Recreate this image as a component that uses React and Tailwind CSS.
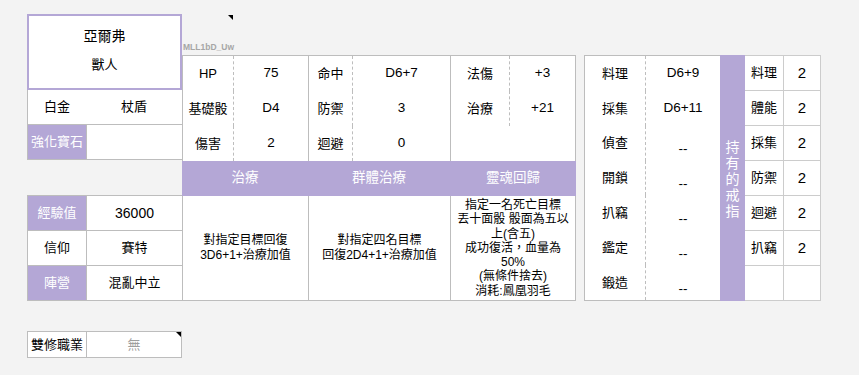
import React from "react";

const statCols = [
  { w: "w-[126px]", lw: "w-[50px]", rows: [["HP", "75"], ["基礎骰", "D4"], ["傷害", "2"]] },
  { w: "w-[142px]", lw: "w-[43px]", rows: [["命中", "D6+7"], ["防禦", "3"], ["迴避", "0"]] },
  { w: "w-[126px] border-r", lw: "w-[58px]", rows: [["法傷", "+3"], ["治療", "+21"], null] },
];

const skills = [
  { w: "w-[126px]", title: "治療", lines: ["對指定目標回復", "3D6+1+治療加值"], lead: "leading-[15px]" },
  { w: "w-[142px]", title: "群體治療", lines: ["對指定四名目標", "回復2D4+1+治療加值"], lead: "leading-[15px]" },
  {
    w: "w-[126px] border-r",
    title: "靈魂回歸",
    lines: ["指定一名死亡目標", "丟十面骰 骰面為五以", "上(含五)", "成功復活，血量為", "50%", "(無條件捨去)", "消耗:鳳凰羽毛"],
    lead: "leading-[14.3px]",
  },
];

const crafts = [
  ["料理", "D6+9"],
  ["採集", "D6+11"],
  ["偵查", "--"],
  ["開鎖", "--"],
  ["扒竊", "--"],
  ["鑑定", "--"],
  ["鍛造", "--"],
];

const rings = [
  ["料理", "2"],
  ["體能", "2"],
  ["採集", "2"],
  ["防禦", "2"],
  ["迴避", "2"],
  ["扒竊", "2"],
  ["", ""],
];

function Corner() {
  return <div className="absolute right-0 top-0 w-0 h-0 border-l-[5px] border-l-transparent border-t-[5px] border-t-black" />;
}

export default function App() {
  return (
    <div className="w-[859px] h-[375px] overflow-hidden bg-[#f3f3f3] pl-[27px] pt-[14px] flex text-black text-[13px] font-['Liberation_Sans','Noto_Sans_CJK_TC',sans-serif]">
      {/* left column */}
      <div className="w-[155px] flex flex-col">
        <div className="h-[76px] border-2 border-[#b4a7d6] bg-white flex flex-col items-center pt-[11px]">
          <div className="text-[14px] leading-[18px]">亞爾弗</div>
          <div className="mt-[11px] leading-[18px]">獸人</div>
        </div>
        <div className="h-[35px] flex bg-white border-l border-b border-[#bdbdbd]">
          <div className="w-[58px] flex items-center justify-center">白金</div>
          <div className="flex-1 flex items-center justify-center">杖盾</div>
        </div>
        <div className="h-[35px] flex bg-white border-l border-b border-[#bdbdbd]">
          <div className="w-[58px] flex items-center justify-center bg-[#b4a7d6] text-white">強化寶石</div>
          <div className="flex-1 border-l border-[#bdbdbd]" />
        </div>
        <div className="h-[35px]" />
        <div className="flex flex-col border-l border-t border-[#bdbdbd]">
          {[
            ["經驗值", "36000", true],
            ["信仰", "賽特", false],
            ["陣營", "混亂中立", true],
          ].map(([k, v, p]) => (
            <div key={k} className="h-[35px] flex bg-white border-b border-[#bdbdbd]">
              <div className={`w-[58px] flex items-center justify-center ${p ? "bg-[#b4a7d6] text-white" : ""}`}>{k}</div>
              <div className={`flex-1 flex items-center justify-center border-l border-[#bdbdbd] ${v === "36000" ? "text-[14px]" : ""}`}>{v}</div>
            </div>
          ))}
        </div>
        <div className="h-[30px]" />
        <div className="h-[27px] flex bg-white border border-[#bdbdbd]">
          <div className="w-[58px] flex items-center justify-center whitespace-nowrap">雙修職業</div>
          <div className="relative flex-1 flex items-center justify-center border-l border-[#bdbdbd] text-[#9e9e9e]">
            無
            <Corner />
          </div>
        </div>
      </div>

      {/* middle column */}
      <div className="w-[394px] flex flex-col">
        <div className="relative h-[41px] flex items-end pb-[3px] pl-[1px]">
          <span className="text-[8.5px] leading-[10px] font-bold text-[#a6a6a6]">MLL1bD_Uw</span>
          <div className="absolute left-[46px] top-[1px] w-0 h-0 border-l-[5px] border-l-transparent border-t-[5px] border-t-black" />
        </div>
        <div className="flex border-t border-[#bdbdbd] bg-white">
          {statCols.map((c, i) => (
            <div key={i} className={`${c.w} border-l border-[#bdbdbd] flex flex-col`}>
              {c.rows.map((r, j) => (
                <div key={j} className="h-[35px] flex">
                  <div className={`${c.lw} flex items-center justify-center`}>{r ? r[0] : ""}</div>
                  <div className={`flex-1 flex items-center justify-center text-[13.5px] ${r ? "border-l border-dashed border-[#bdbdbd]" : ""}`}>
                    {r ? r[1] : ""}
                  </div>
                </div>
              ))}
            </div>
          ))}
        </div>
        <div className="h-[35px] flex bg-[#b4a7d6] text-white text-[13.5px]">
          {skills.map((s) => (
            <div key={s.title} className={`${s.w.replace(" border-r", "")} flex items-center justify-center`}>
              {s.title}
            </div>
          ))}
        </div>
        <div className="h-[105px] flex bg-white border-b border-[#bdbdbd] text-[12px]">
          {skills.map((s) => (
            <div key={s.title} className={`${s.w} border-l border-[#bdbdbd] flex flex-col items-center justify-center ${s.lead}`}>
              {s.lines.map((l) => (
                <div key={l} className="whitespace-nowrap">
                  {l}
                </div>
              ))}
            </div>
          ))}
        </div>
      </div>

      {/* right column */}
      <div className="ml-[8px] mt-[41px] flex h-[246px]">
        <div className="w-[136px] flex flex-col bg-white border-l border-t border-b border-[#bdbdbd]">
          {crafts.map(([k, v]) => (
            <div key={k} className="h-[35px] flex">
              <div className="w-[60px] flex items-center justify-center">{k}</div>
              <div
                className={`flex-1 flex justify-center border-l border-dashed border-[#bdbdbd] text-[13.5px] ${
                  v === "--" ? "items-end pb-[1px]" : "items-center"
                }`}
              >
                {v}
              </div>
            </div>
          ))}
        </div>
        <div className="w-[25px] bg-[#b4a7d6] text-white flex flex-col items-center justify-center text-[14px] leading-[16px] pt-[2px]">
          {"持有的戒指".split("").map((c) => (
            <span key={c}>{c}</span>
          ))}
        </div>
        <div className="w-[76px] flex flex-col bg-white border-t border-[#cccccc]">
          {rings.map(([k, v], i) => (
            <div key={i} className="h-[35px] flex border-b border-[#cccccc]">
              <div className="w-[39px] flex items-center justify-center border-r border-[#cccccc]">{k}</div>
              <div className="flex-1 flex items-center justify-center border-r border-[#cccccc] text-[15px]">{v}</div>
            </div>
          ))}
        </div>
      </div>
    </div>
  );
}
